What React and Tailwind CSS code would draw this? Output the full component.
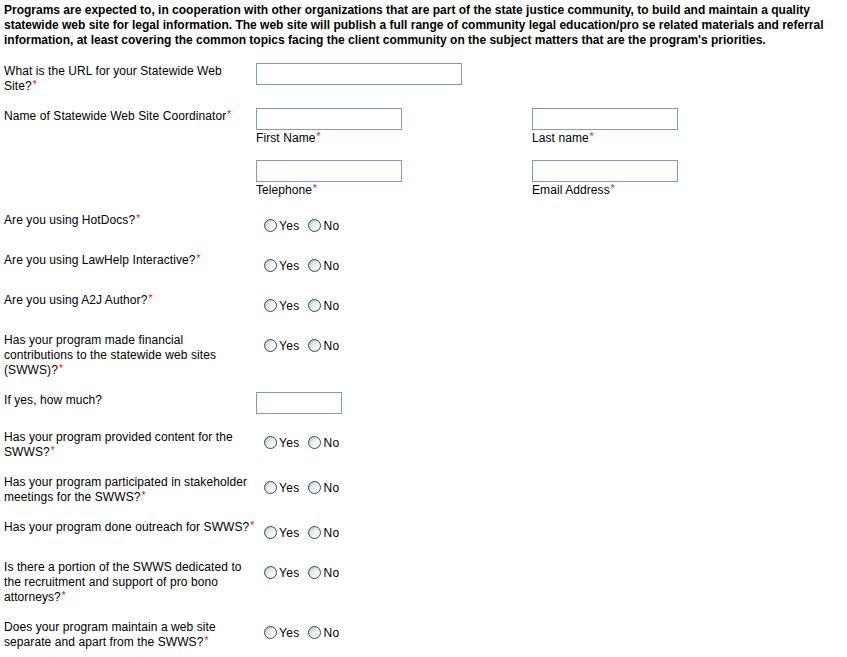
import React from "react";

function Req() {
  return <span className="text-[#ff0000] text-[10px] leading-none align-top relative top-[1px] ml-[1px]">*</span>;
}

function TextBox({ w }) {
  return <div className={`${w} h-[22px] border border-[#7f9db9] bg-white`} />;
}

function Radio({ label, className = "" }) {
  return (
    <span className={`inline-flex items-center h-[15px] ${className}`}>
      <span className="w-[13px] h-[13px] rounded-full border border-[#1c5180] bg-linear-to-br from-[#d4d4cc] via-[#f0f0ea] to-white shadow-[inset_1px_1px_1px_rgba(0,0,0,0.08)]" />
      <span className="ml-[2px] relative top-[1px] tracking-[0.3px]">{label}</span>
    </span>
  );
}

function YesNo() {
  return (
    <div className="h-[25px] pt-[6px] pl-[8px] flex items-start">
      <Radio label="Yes" />
      <Radio label="No" className="ml-[9px]" />
    </div>
  );
}

function Row({ lines, children }) {
  return (
    <div className="flex items-start pb-[15px]">
      <div className="w-[252px] shrink-0 whitespace-nowrap relative top-[1px]">
        {lines.map((l, i) => (
          <div key={i}>
            {l}
            {i === lines.length - 1 && <Req />}
          </div>
        ))}
      </div>
      <div>{children}</div>
    </div>
  );
}

function SubField({ label }) {
  return (
    <div>
      <TextBox w="w-[146px]" />
      <div className="h-[15px] whitespace-nowrap relative top-[1px]">
        {label}
        <Req />
      </div>
    </div>
  );
}

export default function App() {
  const radioRows = [
    ["Are you using HotDocs?"],
    ["Are you using LawHelp Interactive?"],
    ["Are you using A2J Author?"],
    ["Has your program made financial", "contributions to the statewide web sites", "(SWWS)?"],
  ];
  const radioRows2 = [
    ["Has your program provided content for the", "SWWS?"],
    ["Has your program participated in stakeholder", "meetings for the SWWS?"],
    ["Has your program done outreach for SWWS?"],
    ["Is there a portion of the SWWS dedicated to", "the recruitment and support of pro bono", "attorneys?"],
    ["Does your program maintain a web site", "separate and apart from the SWWS?"],
  ];

  return (
    <div className="min-h-screen bg-white text-black font-['Liberation_Sans',Arial,sans-serif] text-[12px] leading-[15px] tracking-[0.08px] pl-[4px] pt-[3px]">
      <div className="font-bold whitespace-nowrap tracking-normal">
        Programs are expected to, in cooperation with other organizations that are part of the state justice community, to build and maintain a quality
        <br />
        statewide web site for legal information. The web site will publish a full range of community legal education/pro se related materials and referral
        <br />
        information, at least covering the common topics facing the client community on the subject matters that are the program's priorities.
      </div>

      <div className="mt-[15px]">
        <Row lines={["What is the URL for your Statewide Web", "Site?"]}>
          <TextBox w="w-[206px]" />
        </Row>

        <Row lines={["Name of Statewide Web Site Coordinator"]}>
          <div className="grid grid-cols-[276px_276px] gap-y-[15px]">
            <SubField label="First Name" />
            <SubField label="Last name" />
            <SubField label="Telephone" />
            <SubField label="Email Address" />
          </div>
        </Row>

        {radioRows.map((l, i) => (
          <Row key={i} lines={l}>
            <YesNo />
          </Row>
        ))}

        <div className="flex items-start pb-[15px]">
          <div className="w-[252px] shrink-0 relative top-[1px]">If yes, how much?</div>
          <TextBox w="w-[86px]" />
        </div>

        {radioRows2.map((l, i) => (
          <Row key={i} lines={l}>
            <YesNo />
          </Row>
        ))}
      </div>
    </div>
  );
}
